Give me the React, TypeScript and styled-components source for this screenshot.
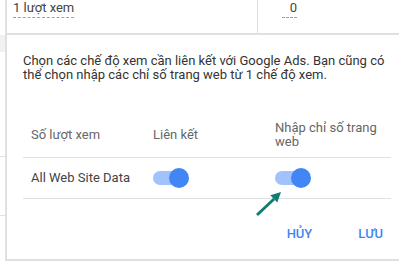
import React from 'react';
import styled, { createGlobalStyle } from 'styled-components';

const GlobalStyle = createGlobalStyle`
  html, body {
    margin: 0;
    width: 406px;
    height: 261px;
    overflow: hidden;
    background: #fff;
    font-family: Roboto, 'Liberation Sans', sans-serif;
  }
`;

const Page = styled.div`
  display: grid;
  grid-template-columns: 5px 1fr;
  height: 261px;
`;

const Gutter = styled.div`
  display: flex;
  flex-direction: column;
  padding-top: 35px;
`;

const GutterShade = styled.div`
  height: 17px;
  background: #f1f1f1;
`;

const GutterRule = styled.div<{ $gap: number }>`
  margin-top: ${({ $gap }) => $gap}px;
  border-top: 1px solid #e0e0e0;
`;

const Main = styled.div`
  border-left: 2px solid #e0e0e0;
  display: flex;
  flex-direction: column;
`;

const TopRow = styled.div`
  display: flex;
  height: 33px;
  font-size: 13px;
  color: #444;
`;

const TopCell = styled.div<{ $width?: number; $pad: number }>`
  ${({ $width }) => ($width ? `width: ${$width}px; border-right: 1px solid #e0e0e0;` : 'flex: 1;')}
  padding-left: ${({ $pad }) => $pad}px;
  box-sizing: border-box;
  overflow: hidden;
`;

const Dashed = styled.span<{ $width?: number }>`
  display: inline-block;
  margin-top: -4px;
  line-height: 14px;
  padding-bottom: 2px;
  border-bottom: 1px dashed #a0a0a0;
  ${({ $width }) => ($width ? `width: ${$width}px; text-align: right;` : '')}
`;

const Dialog = styled.div`
  position: relative;
  width: 392px;
  height: 228px;
  box-sizing: border-box;
  border-top: 2px solid #e0e0e0;
  border-bottom: 2px solid #e0e0e0;
  padding: 19px 8px 0 16px;
  font-size: 13px;
`;

const Intro = styled.p`
  margin: 0;
  line-height: 13.5px;
  color: #333;
`;

const Table = styled.div`
  margin-top: 32px;
  width: 368px;
`;

const Row = styled.div<{ $height: number; $head?: boolean }>`
  display: grid;
  grid-template-columns: 122px 122px 1fr;
  align-items: center;
  height: ${({ $height }) => $height}px;
  border-bottom: 1px solid #e0e0e0;
  color: ${({ $head }) => ($head ? '#666' : '#444')};
  line-height: 14px;
`;

const Cell = styled.div`
  padding-left: 8px;
`;

const Switch = styled.div`
  position: relative;
  width: 34px;
  height: 14px;
  border-radius: 7px;
  background: #a1c2fa;
`;

const Thumb = styled.div`
  position: absolute;
  top: -3px;
  left: 16px;
  width: 20px;
  height: 20px;
  border-radius: 50%;
  background: #4285f4;
`;

const Actions = styled.div`
  display: flex;
  justify-content: flex-end;
  gap: 30px;
  margin-top: 16px;
  padding-right: 0;
`;

const TextButton = styled.button`
  height: 36px;
  padding: 0 8px;
  border: none;
  background: none;
  font-family: Roboto, 'Liberation Sans', sans-serif;
  font-size: 13px;
  font-weight: 500;
  color: #4285f4;
  text-transform: uppercase;
  cursor: pointer;
`;

const Pointer = styled.svg`
  position: absolute;
  left: 248px;
  top: 152px;
`;

function Toggle() {
  return (
    <Switch>
      <Thumb />
    </Switch>
  );
}

export default function App() {
  return (
    <Page>
      <GlobalStyle />
      <Gutter>
        <GutterShade />
        <GutterRule $gap={104} />
        <GutterRule $gap={58} />
      </Gutter>
      <Main>
        <TopRow>
          <TopCell $width={251} $pad={6}>
            <Dashed>1 lượt xem</Dashed>
          </TopCell>
          <TopCell $pad={24}>
            <Dashed $width={15}>0</Dashed>
          </TopCell>
        </TopRow>
        <Dialog>
          <Intro>
            Chọn các chế độ xem cần liên kết với Google Ads. Bạn cũng có thể chọn nhập các chỉ
            số trang web từ 1 chế độ xem.
          </Intro>
          <Table>
            <Row $height={44} $head>
              <Cell>Số lượt xem</Cell>
              <Cell>Liên kết</Cell>
              <Cell>Nhập chỉ số trang web</Cell>
            </Row>
            <Row $height={40}>
              <Cell>All Web Site Data</Cell>
              <Cell>
                <Toggle />
              </Cell>
              <Cell>
                <Toggle />
              </Cell>
            </Row>
          </Table>
          <Actions>
            <TextButton>Hủy</TextButton>
            <TextButton>Lưu</TextButton>
          </Actions>
          <Pointer width="30" height="32" viewBox="0 0 30 32">
            <line x1="2" y1="28" x2="19" y2="12" stroke="#117c74" strokeWidth="3" />
            <polygon points="26,5 22.3,15.5 15.3,8.3" fill="#117c74" />
          </Pointer>
        </Dialog>
      </Main>
    </Page>
  );
}
